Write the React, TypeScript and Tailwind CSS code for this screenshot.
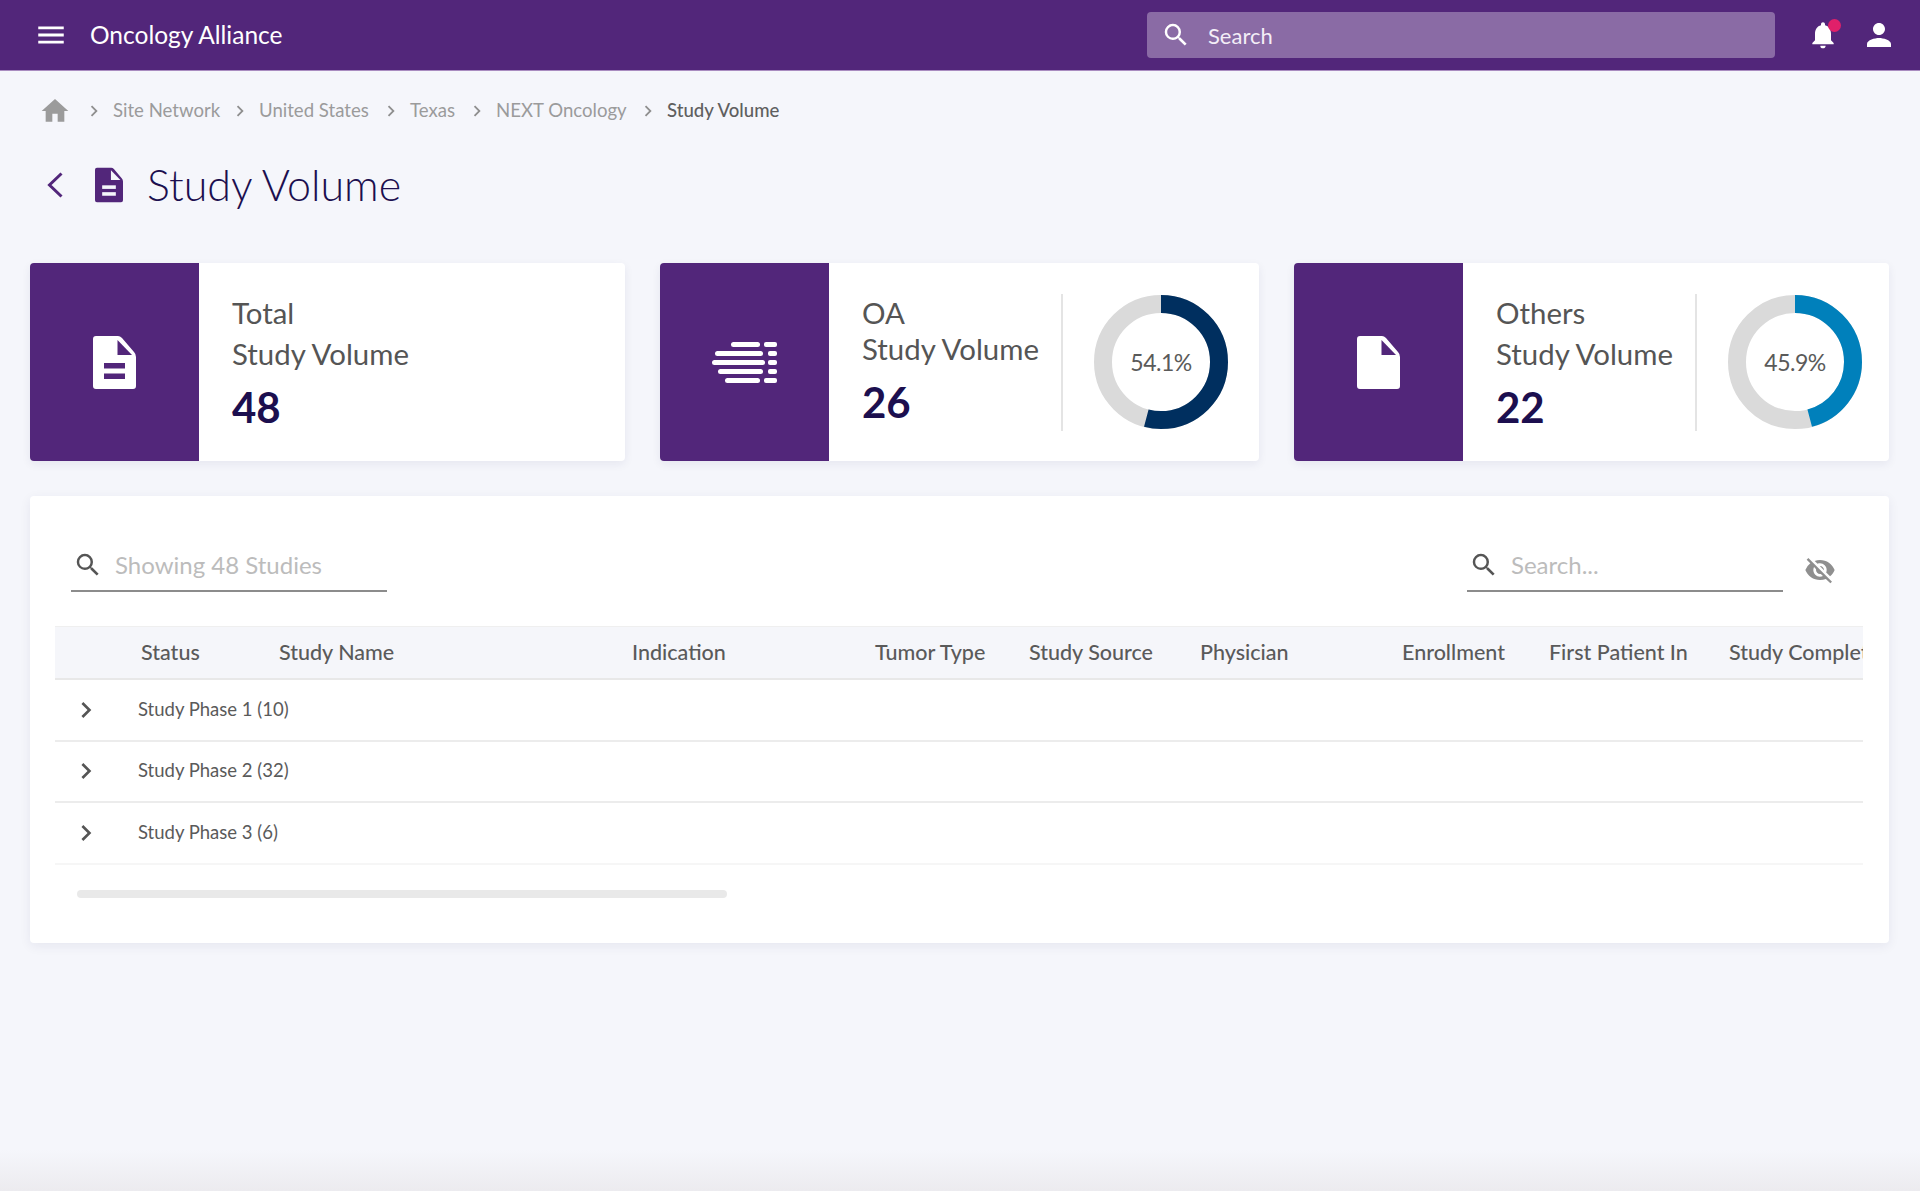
import React from "react";
import { MdMenu, MdSearch, MdNotifications, MdPerson, MdHome, MdVisibilityOff, MdChevronRight } from "react-icons/md";

function Sheet({ bars, className, cut }: { bars?: boolean; className: string; cut: string }) {
  return (
    <svg viewBox="0 0 43 53" className={className} fill="currentColor">
      <path d="M3 0H25Q27 0 29 2L41 16Q43 18 43 21V50A3 3 0 0 1 40 53H3A3 3 0 0 1 0 50V3A3 3 0 0 1 3 0Z" />
      <path d="M24.5 4L39 19H24.5Z" fill={cut} />
      {bars && <rect x="11" y="27" width="21" height="5.5" fill={cut} />}
      {bars && <rect x="11" y="37.5" width="21" height="5.5" fill={cut} />}
    </svg>
  );
}

function Lines() {
  const rows = [
    [19, 48, 52, 65],
    [3, 51, 56, 65],
    [0, 53, 56, 65],
    [6, 51, 56, 65],
    [13, 48, 52, 65],
  ];
  return (
    <svg viewBox="0 0 65 41" className="w-[65px] h-[41px]" fill="#fff">
      {rows.map((r, i) => (
        <g key={i}>
          <rect x={r[0]} y={i * 9} width={r[1] - r[0]} height="5" rx="2.5" />
          <rect x={r[2]} y={i * 9} width={r[3] - r[2]} height="5" rx="2" />
        </g>
      ))}
    </svg>
  );
}

function Donut({ value, color }: { value: number; color: string }) {
  return (
    <div className="relative w-[134px] h-[134px]">
      <svg viewBox="0 0 134 134" className="w-[134px] h-[134px] -rotate-90">
        <circle cx="67" cy="67" r="58" fill="none" stroke="#dadada" strokeWidth="18" />
        <circle cx="67" cy="67" r="58" fill="none" stroke={color} strokeWidth="18" pathLength={100} strokeDasharray={`${value} 100`} />
      </svg>
      <div className="absolute inset-0 flex items-center justify-center text-[23px] text-[#5a5a5a] tracking-[-0.5px]">{value}%</div>
    </div>
  );
}

function Card({
  width, icon, top, value, compact, donut, color,
}: {
  width: string; icon: React.ReactNode; top: string; value: string; compact?: boolean; donut?: number; color?: string;
}) {
  return (
    <div className={`${width} h-[198px] flex rounded-[4px] bg-white shadow-[0_3px_10px_rgba(30,30,80,0.07)] overflow-hidden`}>
      <div className="w-[169px] shrink-0 bg-[#52267a] flex items-center justify-center">{icon}</div>
      <div className={`pl-[33px] w-[232px] shrink-0 text-[#555555] text-[29.4px] ${compact ? "pt-[32px] leading-[36px]" : "pt-[29px] leading-[41px]"}`}>
        <div>{top}</div>
        <div className="whitespace-nowrap">Study Volume</div>
        <div className={`text-[42px] leading-[48px] font-bold text-[#1c0f4f] ${compact ? "mt-[11px]" : "mt-[9px]"}`}>{value}</div>
      </div>
      {donut !== undefined && (
        <div className="flex items-center flex-1">
          <div className="w-[2px] h-[137px] bg-[#e4e4e4]" />
          <div className="ml-[31px]">
            <Donut value={donut} color={color as string} />
          </div>
        </div>
      )}
    </div>
  );
}

function SearchField({ placeholder, className }: { placeholder: string; className: string }) {
  return (
    <div className={`${className} w-[316px] h-[50px] flex items-center border-b-2 border-[#8c8c8c]`}>
      <MdSearch className="text-[#555555] w-[30px] h-[30px] ml-[2px] -mt-[2px] shrink-0" />
      <span className="ml-[12px] -mt-[2px] text-[24px] text-[#bcbcbc]">{placeholder}</span>
    </div>
  );
}

const cols = [
  { name: "Status", w: "w-[138px]" },
  { name: "Study Name", w: "w-[353px]" },
  { name: "Indication", w: "w-[243px]" },
  { name: "Tumor Type", w: "w-[154px]" },
  { name: "Study Source", w: "w-[171px]" },
  { name: "Physician", w: "w-[202px]" },
  { name: "Enrollment", w: "w-[147px]" },
  { name: "First Patient In", w: "w-[180px]" },
  { name: "Study Completion", w: "w-[180px]" },
];

const crumbs = [
  { t: "Site Network", w: "w-[107px]" },
  { t: "United States", w: "w-[112px]" },
  { t: "Texas", w: "w-[47px]" },
  { t: "NEXT Oncology", w: "w-[132px]" },
];

export default function App() {
  return (
    <div className="min-h-[1191px] flex flex-col bg-[#f5f6fb] font-['Lato','Open_Sans',sans-serif] overflow-hidden">
      <header className="h-[71px] shrink-0 bg-[#52267a] border-b border-[#a98cc0] flex items-center text-white">
        <MdMenu className="w-[34px] h-[34px] ml-[34px] shrink-0" />
        <span className="ml-[22px] text-[24.5px] whitespace-nowrap">Oncology Alliance</span>
        <div className="ml-auto w-[628px] h-[46px] rounded-[4px] bg-[#8a6ba5] flex items-center">
          <MdSearch className="w-[30px] h-[30px] ml-[14px] shrink-0" />
          <span className="ml-[17px] text-[22px] text-[#f3eef7]">Search</span>
        </div>
        <div className="relative ml-[32px] w-[32px] h-[32px]">
          <MdNotifications className="w-[32px] h-[32px]" />
          <span className="absolute top-0 right-[-2px] w-[13px] h-[13px] rounded-full bg-[#e0206a]" />
        </div>
        <MdPerson className="w-[36px] h-[36px] ml-[22px] mr-[23px] shrink-0" />
      </header>

      <nav className="mt-[20px] h-[40px] flex items-center pl-[39px] text-[18.6px] text-[#9b9b9b]">
        <MdHome className="w-[32px] h-[32px] shrink-0" />
        <MdChevronRight className="w-[22px] h-[22px] ml-[12px] shrink-0 text-[#8f8f8f]" />
        {crumbs.map((c) => (
          <React.Fragment key={c.t}>
            <span className={`${c.w} ml-[8px] whitespace-nowrap`}>{c.t}</span>
            <MdChevronRight className="w-[22px] h-[22px] ml-[9px] shrink-0 text-[#8f8f8f]" />
          </React.Fragment>
        ))}
        <span className="ml-[8px] text-[#5f5f5f] font-medium whitespace-nowrap">Study Volume</span>
      </nav>

      <div className="mt-[24px] h-[60px] flex items-center pl-[47px]">
        <svg viewBox="0 0 16 26" className="w-[16px] h-[26px] shrink-0" fill="none" stroke="#52267a" strokeWidth="3">
          <path d="M14.5 1.5L2.5 13L14.5 24.5" />
        </svg>
        <div className="ml-[32px] text-[#52267a]">
          <Sheet bars cut="#f5f6fb" className="w-[28px] h-[36px]" />
        </div>
        <h1 className="ml-[24px] text-[43px] font-light text-[#1c0f4f] whitespace-nowrap">Study Volume</h1>
      </div>

      <section className="mt-[48px] pl-[30px] flex gap-[35px]">
        <Card
          width="w-[595px]"
          icon={<div className="text-white"><Sheet bars cut="#52267a" className="w-[43px] h-[53px]" /></div>}
          top="Total"
          value="48"
        />
        <Card
          width="w-[599px]"
          icon={<Lines />}
          top="OA"
          value="26"
          compact
          donut={54.1}
          color="#002f5f"
        />
        <Card
          width="w-[595px]"
          icon={<div className="text-white"><Sheet cut="#52267a" className="w-[43px] h-[53px]" /></div>}
          top="Others"
          value="22"
          donut={45.9}
          color="#0080bb"
        />
      </section>

      <section className="mt-[35px] mx-[30px] w-[1859px] h-[447px] bg-white rounded-[4px] shadow-[0_3px_12px_rgba(30,30,80,0.07)] pt-[46px] overflow-hidden">
        <div className="flex items-start">
          <SearchField className="ml-[41px]" placeholder="Showing 48 Studies" />
          <SearchField className="ml-[1080px]" placeholder="Search..." />
          <MdVisibilityOff className="w-[32px] h-[32px] ml-[21px] mt-[12px] text-[#8f8f8f] shrink-0" />
        </div>
        <div className="mx-[25px] mt-[34px] w-[1808px] overflow-hidden">
          <div className="h-[54px] flex items-center bg-[#f5f6fa] border-t border-[#efefef] border-b-2 border-b-[#e8e8e8] pl-[86px] text-[21.5px] font-medium text-[#5a5a5a] whitespace-nowrap">
            {cols.map((c) => (
              <div key={c.name} className={`${c.w} shrink-0`}>{c.name}</div>
            ))}
          </div>
          {["Study Phase 1 (10)", "Study Phase 2 (32)", "Study Phase 3 (6)"].map((r, i) => (
            <div key={r} className={`h-[61.5px] flex items-center border-b-2 ${i === 2 ? "border-[#f6f6f6]" : "border-[#ececec]"}`}>
              <MdChevronRight className="w-[32px] h-[32px] ml-[15px] shrink-0 text-[#555555]" />
              <span className="ml-[36px] text-[18.5px] text-[#5a5a5a]">{r}</span>
            </div>
          ))}
          <div className="mt-[25px] ml-[22px] w-[650px] h-[8px] rounded-full bg-[#e9e9e9]" />
        </div>
      </section>

      <div className="flex-1" />
      <div className="h-[41px] shrink-0 bg-gradient-to-b from-[#f5f6fb] to-[#ecebef]" />
    </div>
  );
}
